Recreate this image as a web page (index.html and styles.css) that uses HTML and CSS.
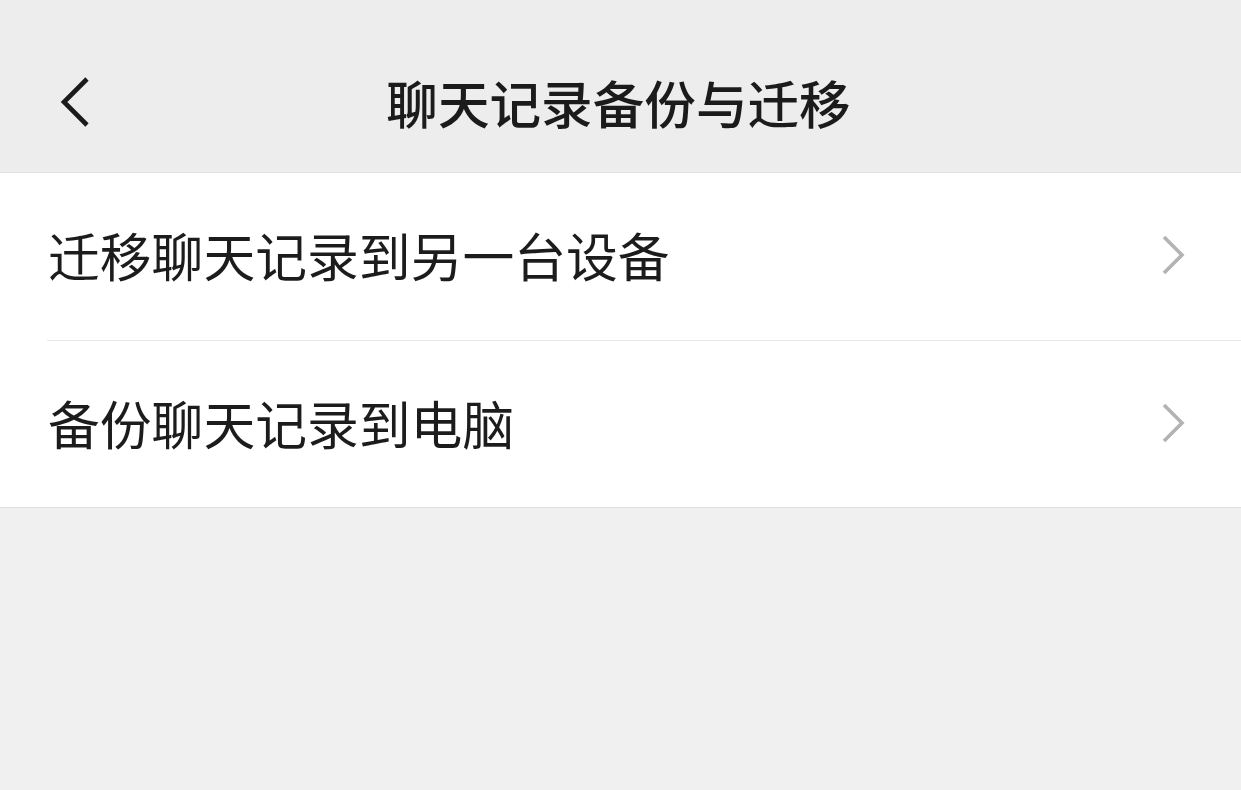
FILE: index.html
```html
<!DOCTYPE html>
<html lang="zh-CN">
<head>
<meta charset="utf-8">
<title>聊天记录备份与迁移</title>
<link rel="stylesheet" href="styles.css">
</head>
<body>
<div class="page">
  <header class="topbar">
    <div class="back">
      <svg width="40" height="60" viewBox="0 0 40 60" aria-hidden="true">
        <polyline points="29,7 6,30 29,53" fill="none" stroke="#1b1b1b" stroke-width="4.6" stroke-linecap="butt" stroke-linejoin="miter"/>
      </svg>
    </div>
    <h1 class="title">聊天记录备份与迁移</h1>
    <div class="spacer"></div>
  </header>
  <ul class="list">
    <li class="item">
      <span class="label">迁移聊天记录到另一台设备</span>
      <svg class="chev" width="30" height="44" viewBox="0 0 30 44" aria-hidden="true">
        <polyline points="6,4 24,22 6,40" fill="none" stroke="#b3b3b3" stroke-width="3.6"/>
      </svg>
    </li>
    <li class="item">
      <span class="label">备份聊天记录到电脑</span>
      <svg class="chev" width="30" height="44" viewBox="0 0 30 44" aria-hidden="true">
        <polyline points="6,4 24,22 6,40" fill="none" stroke="#b3b3b3" stroke-width="3.6"/>
      </svg>
    </li>
  </ul>
</div>
</body>
</html>
```
FILE: styles.css
```css
* { box-sizing: border-box; }
html, body {
  margin: 0;
  padding: 0;
  background: #f0f0f0;
  font-family: "Noto Sans CJK SC", "Noto Sans", sans-serif;
}
.page {
  width: 1241px;
  min-height: 790px;
  background: #f0f0f0;
}
.topbar {
  height: 173px;
  background: #ededed;
  border-bottom: 1px solid #e2e2e2;
  display: flex;
  align-items: center;
  padding: 32px 0 0 58px;
}
.back {
  width: 40px;
  height: 60px;
  display: flex;
}
.title {
  flex: 1;
  margin: 0;
  text-align: center;
  font-size: 51.6px;
  font-weight: 500;
  color: #1b1b1b;
  line-height: 1;
  padding-right: 44px;
  letter-spacing: 0;
}
.spacer { width: 58px; }
.list {
  list-style: none;
  margin: 0;
  padding: 0 0 0 47px;
  background: #ffffff;
  border-bottom: 1px solid #e0e0e0;
}
.item {
  height: 167px;
  display: flex;
  align-items: center;
  justify-content: space-between;
  padding-right: 53px;
  padding-left: 1px;
  padding-bottom: 3px;
}
.item + .item {
  border-top: 1px solid #e6e6e6;
}
.label {
  font-size: 51.8px;
  font-weight: 400;
  color: #1c1c1c;
  line-height: 1;
}
.chev { display: block; }
```
